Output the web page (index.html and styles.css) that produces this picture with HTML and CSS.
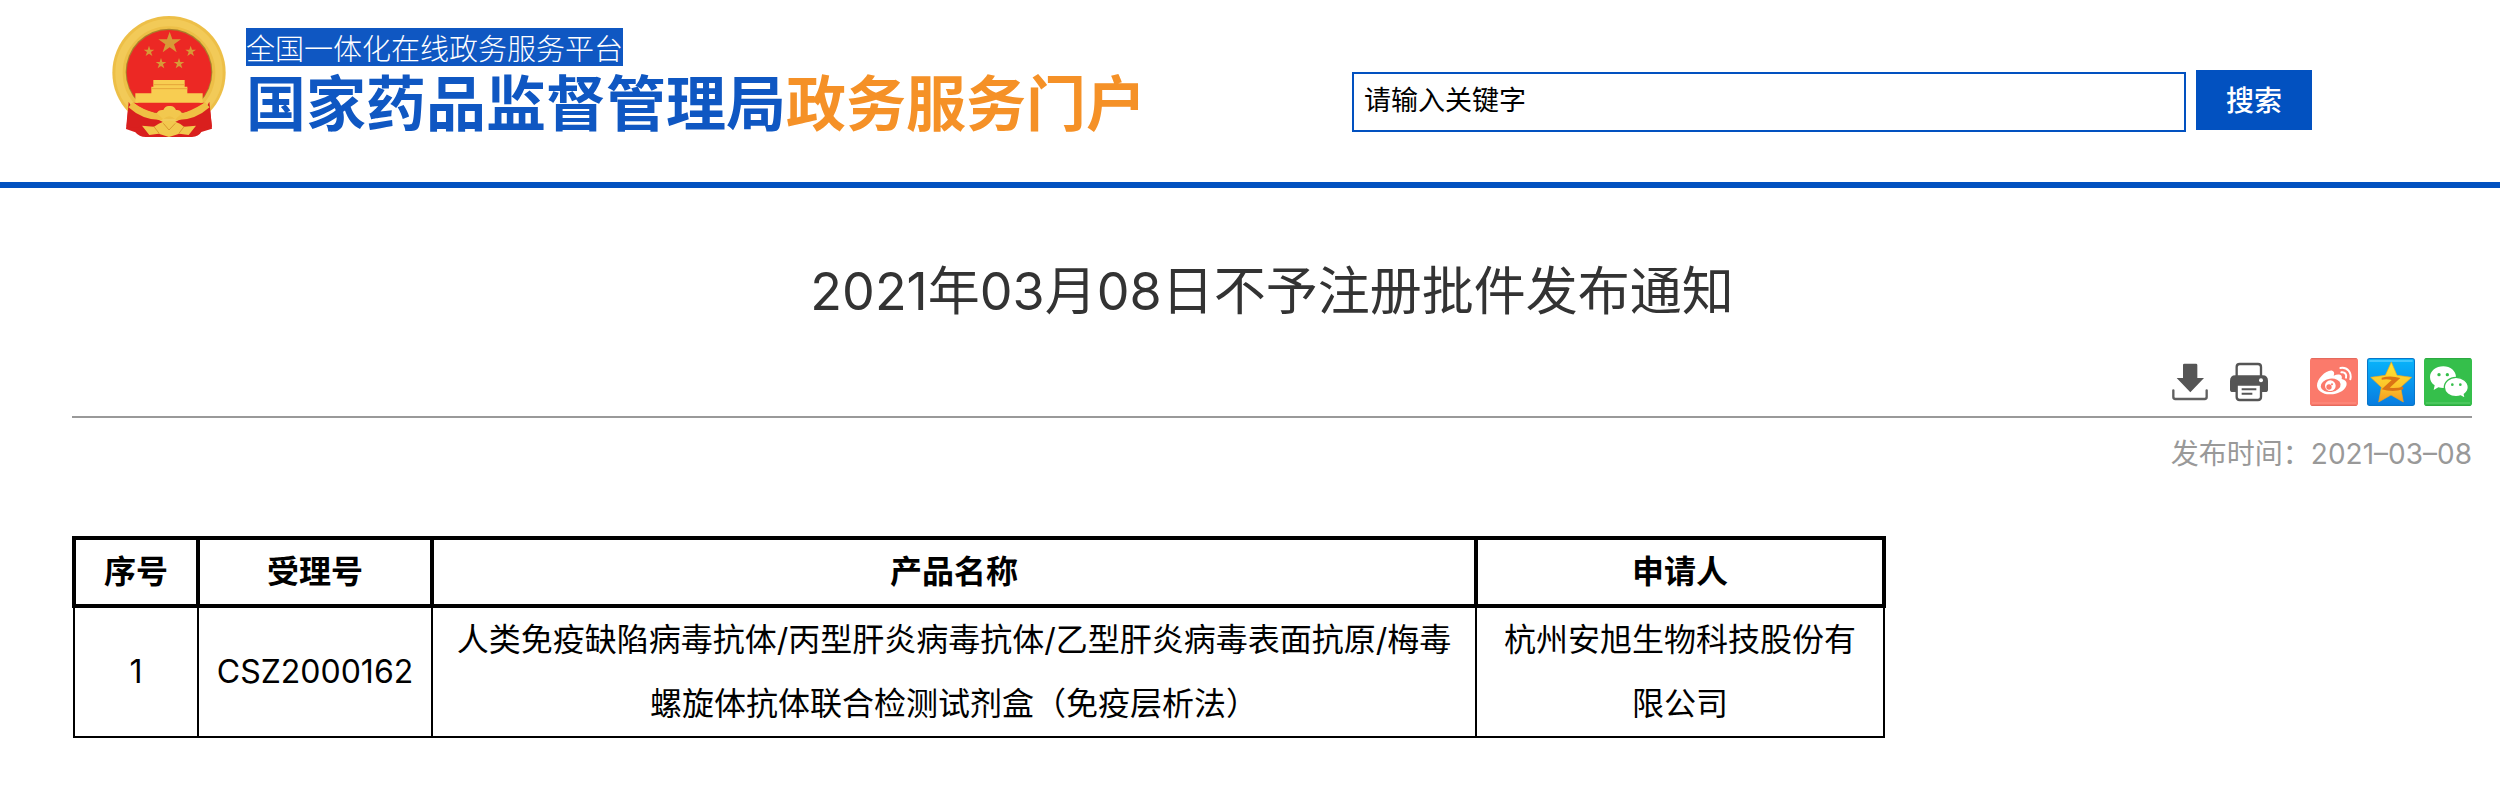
FILE: index.html
```html
<!DOCTYPE html>
<html lang="zh-CN">
<head>
<meta charset="utf-8">
<meta name="viewport" content="width=device-width, initial-scale=1">
<title>2021年03月08日不予注册批件发布通知</title>
<link rel="stylesheet" href="styles.css">
</head>
<body>
<header class="site-header">
  <div class="brand">
    <svg class="emblem" viewBox="36 18 342 366" aria-hidden="true">
      <path fill="#d91f1e" d="M86 275 L78 357 L106 367 Q118 382 140 381 L276 381 Q296 380 304 366 L336 356 L328 275 Z"/>
      <circle cx="207" cy="188" r="170" fill="#edbf47"/>
      <circle cx="207" cy="188" r="150" fill="none" stroke="#f2ca58" stroke-width="22"/>
      <circle cx="207" cy="186" r="130" fill="#a8802b"/>
      <circle cx="207" cy="187" r="127" fill="#ec2824"/>
      <path fill="#d91f1e" d="M86 275 Q108 318 160 322 L207 345 L254 322 Q308 318 328 275 L336 350 Q300 360 285 346 L270 381 H144 L130 346 Q110 358 80 348 Z"/>
      <path fill="#ec2824" d="M100 278 H314 Q270 304 250 308 L207 288 L165 308 Q130 300 100 278Z"/>
      <path fill="none" stroke="#efc044" stroke-width="20" d="M92 284 Q132 320 182 320 Q207 302 232 320 Q282 320 322 284"/>
      <path fill="#f2c84e" d="M170 310 Q176 298 190 300 Q196 286 209 288 Q222 286 228 300 Q240 298 246 310 L226 328 Q207 310 190 328Z"/>
      <path fill="#f2c84e" d="M126 347 L162 350 L176 341 Q207 324 240 341 L252 350 L288 347 L266 375 L238 371 L207 381 L176 371 L148 375Z"/>
      <path fill="none" stroke="#d9972f" stroke-width="3" d="M162 350 L178 371 M252 350 L236 371 M190 340 L207 360 L226 340"/>
      <path fill="#f8cd51" d="M106 278 V250 H154 V230 H160 V210 H254 V230 H262 V250 H308 V278Z"/>
      <path stroke="#e5a53a" stroke-width="3" d="M154 236 H262 M160 224 H254"/>
      <g fill="#d79a37">
        <path d="M209 65 L217 88 L243 88 L222 103 L230 127 L209 112 L188 127 L196 103 L175 88 L201 88Z"/>
        <path d="M147 107 l4 12 h12 l-10 7 4 12 -10 -7 -10 7 4 -12 -10 -7 h12Z"/>
        <path d="M272 107 l4 12 h12 l-10 7 4 12 -10 -7 -10 7 4 -12 -10 -7 h12Z"/>
        <path d="M183 144 l4 12 h12 l-10 7 4 12 -10 -7 -10 7 4 -12 -10 -7 h12Z"/>
        <path d="M237 144 l4 12 h12 l-10 7 4 12 -10 -7 -10 7 4 -12 -10 -7 h12Z"/>
      </g>
    </svg>
    <div class="brand-text">
      <span class="brand-tag">全国一体化在线政务服务平台</span>
      <span class="brand-name">国家药品监督管理局<span class="brand-accent">政务服务门户</span></span>
    </div>
  </div>
  <form class="search" role="search">
    <input class="search-input" type="text" placeholder="请输入关键字" aria-label="请输入关键字">
    <button class="search-button" type="submit">搜索</button>
  </form>
</header>

<main class="article">
  <h1 class="article-title">2021年03月08日不予注册批件发布通知</h1>
  <div class="toolbar">
    <div class="tools">
      <button class="icon-button" type="button" aria-label="下载">
        <svg width="36" height="38" viewBox="66 70 108 114">
          <path fill="#555" d="M99 76 Q99 72 103 72 H138 Q142 72 142 76 V115 H162 L121 158 L80 115 H99Z"/>
          <path fill="none" stroke="#606060" stroke-width="7" stroke-linecap="round" stroke-linejoin="round" d="M70 152 V172 Q70 178 76 178 H164 Q170 178 170 172 V152"/>
        </svg>
      </button>
      <button class="icon-button" type="button" aria-label="打印">
        <svg width="38" height="40" viewBox="240 69 114 120">
          <path fill="#555" d="M240 126 Q240 109 256 109 H338 Q354 109 354 126 V152 Q354 159 346 159 H248 Q240 159 240 152Z"/>
          <path fill="#fff" stroke="#555" stroke-width="7" d="M260 112 V84 Q260 75 269 75 H324 Q333 75 333 84 V112Z"/>
          <path fill="#fff" stroke="#555" stroke-width="7" d="M260 137 H333 V174 Q333 183 324 183 H269 Q260 183 260 174Z"/>
          <path stroke="#555" stroke-width="6" d="M275 151 H319 M275 164 H307"/>
          <circle cx="333" cy="124" r="6" fill="#fff"/>
        </svg>
      </button>
    </div>
    <div class="share">
      <a class="share-link" href="#weibo" aria-label="分享到微博">
        <svg width="48" height="48" viewBox="480 54 144 144">
          <rect x="480" y="54" width="144" height="144" rx="8" fill="#fb7a6b"/>
          <path fill="none" stroke="#e0685b" stroke-width="3" d="M484 56 H620 M484 196 H620"/>
          <path stroke="#ff9f92" stroke-width="2" d="M486 189 H618"/>
          <path fill="#fff" d="M501 137 C500 116 531 87 547 92 C554 95 553 102 551 107 C565 101 579 103 575 117 C588 120 592 128 589 137 C582 154 560 164 539 163 C517 162 502 152 501 137Z"/>
          <ellipse cx="542" cy="136" rx="30" ry="20" fill="#fb7a6b" transform="rotate(-8 542 136)"/>
          <circle cx="541" cy="137" r="16" fill="#fff"/>
          <circle cx="537" cy="141" r="8" fill="#fb7a6b"/>
          <circle cx="546" cy="133" r="3" fill="#fb7a6b"/>
          <path fill="none" stroke="#fff" stroke-width="6" stroke-linecap="round" d="M571 84 C592 80 606 98 601 118 M574 97 C584 95 591 103 588 113"/>
        </svg>
      </a>
      <a class="share-link" href="#qzone" aria-label="分享到QQ空间">
        <svg width="48" height="48" viewBox="648 54 144 144">
          <defs>
            <linearGradient id="sky" x1="0" y1="0" x2="0" y2="1"><stop offset="0" stop-color="#08b4fb"/><stop offset="1" stop-color="#087de0"/></linearGradient>
            <linearGradient id="gold" x1="0" y1="0" x2="0" y2="1"><stop offset="0" stop-color="#ffea32"/><stop offset=".6" stop-color="#fcc52b"/><stop offset="1" stop-color="#f39a21"/></linearGradient>
          </defs>
          <rect x="648" y="54" width="144" height="144" rx="8" fill="#0876c9"/>
          <rect x="651" y="57" width="138" height="137" rx="5" fill="url(#sky)"/>
          <path stroke="#7edcff" stroke-width="3" d="M655 63 H785"/>
          <path fill="url(#gold)" stroke="#f2a51d" stroke-width="2" stroke-linejoin="round" d="M721 66 L738 106 L782 112 L749 142 L757 186 L720 165 L683 186 L691 142 L659 112 L703 106Z"/>
          <path fill="#db7414" d="M692 113 Q718 105 748 114 L716 143 Q735 146 756 140 L757 148 Q725 158 692 148 L722 120 Q708 116 692 119Z"/>
        </svg>
      </a>
      <a class="share-link" href="#wechat" aria-label="分享到微信">
        <svg width="48" height="48" viewBox="822 54 144 144">
          <rect x="822" y="54" width="144" height="144" rx="8" fill="#35bf4b"/>
          <path stroke="#2ba63f" stroke-width="3" d="M826 56 H962 M826 196 H962"/>
          <path stroke="#75d783" stroke-width="2" d="M828 189 H960"/>
          <path fill="#fff" d="M880 79 C901 79 918 93 918 111 C918 130 902 144 880 144 Q872 144 865 142 L851 150 L854 136 C845 130 840 121 840 111 C840 93 858 79 880 79Z"/>
          <path fill="#fff" stroke="#35bf4b" stroke-width="4" d="M918 112 C938 112 955 125 955 142 C955 151 950 158 943 163 L946 176 L932 168 Q926 170 918 170 C898 170 883 158 883 142 C883 125 899 112 918 112Z"/>
          <g fill="#35bf4b"><circle cx="867" cy="104" r="5"/><circle cx="892" cy="104" r="5"/><circle cx="907" cy="134" r="4"/><circle cx="931" cy="134" r="4"/></g>
        </svg>
      </a>
    </div>
  </div>
  <p class="publish-date">发布时间：2021–03–08</p>

  <table class="results">
    <colgroup><col class="col-index"><col class="col-number"><col class="col-product"><col class="col-applicant"></colgroup>
    <thead>
      <tr><th scope="col">序号</th><th scope="col">受理号</th><th scope="col">产品名称</th><th scope="col">申请人</th></tr>
    </thead>
    <tbody>
      <tr>
        <td>1</td>
        <td>CSZ2000162</td>
        <td>人类免疫缺陷病毒抗体/丙型肝炎病毒抗体/乙型肝炎病毒表面抗原/梅毒螺旋体抗体联合检测试剂盒（免疫层析法）</td>
        <td>杭州安旭生物科技股份有限公司</td>
      </tr>
    </tbody>
  </table>
</main>
</body>
</html>
```
FILE: styles.css
```css
* {
  box-sizing: border-box;
}

body {
  margin: 0;
  background: #fff;
  color: #000;
  font-family: Inter, "Noto Sans CJK SC", sans-serif;
}

.site-header {
  display: flex;
  justify-content: space-between;
  align-items: flex-start;
  padding: 16px 188px 44px 112px;
  border-bottom: 6px solid #0251c0;
}

.brand {
  display: flex;
  gap: 20px;
}

.emblem {
  width: 114px;
  height: 122px;
}

.brand-text {
  display: flex;
  flex-direction: column;
  align-items: flex-start;
  gap: 4px;
  padding-top: 12px;
  font-family: "Noto Sans CJK SC", sans-serif;
  white-space: nowrap;
}

.brand-tag {
  background: #0f57c2;
  color: #fff;
  font-size: 29px;
  font-weight: 300;
  line-height: 38px;
}

.brand-name {
  color: #0f57c2;
  font-size: 60px;
  font-weight: 700;
  line-height: 60px;
}

.brand-accent {
  color: #f59127;
}

.search {
  display: flex;
  align-items: flex-start;
  gap: 10px;
  width: 960px;
  padding-top: 54px;
}

.search-input {
  flex: 1;
  min-width: 0;
  height: 60px;
  margin-top: 2px;
  padding: 0 10px 4px;
  border: 2px solid #0251c0;
  border-radius: 0;
  background: #fff;
  color: #000;
  font-family: inherit;
  font-size: 27px;
}

.search-input::placeholder {
  color: #000;
  opacity: 1;
}

.search-button {
  width: 116px;
  height: 60px;
  padding: 0 0 2px;
  border: 0;
  background: #0251c0;
  color: #fff;
  font-family: inherit;
  font-size: 28px;
  font-weight: 500;
}

.article {
  padding: 68px 28px 40px 72px;
}

.article-title {
  margin: 0 0 30px;
  color: #333;
  font-size: 52px;
  font-weight: 400;
  line-height: 72px;
  text-align: center;
}

.toolbar {
  display: flex;
  justify-content: flex-end;
  align-items: center;
  gap: 42px;
  padding-bottom: 10px;
  border-bottom: 2px solid #999;
}

.tools {
  display: flex;
  align-items: center;
  gap: 22px;
}

.icon-button {
  display: flex;
  padding: 0;
  border: 0;
  background: none;
}

.share {
  display: flex;
  gap: 9px;
}

.share-link,
.share-link svg {
  display: block;
}

.publish-date {
  margin: 14px 0 60px;
  color: #999;
  font-size: 28px;
  line-height: 44px;
  text-align: right;
}

.results {
  width: 1814px;
  max-width: 100%;
  border-collapse: collapse;
  table-layout: fixed;
  font-size: 32px;
  line-height: 64px;
  text-align: center;
}

.results th,
.results td {
  padding: 0 14px;
}

.results th {
  border: 4px solid #000;
  font-weight: 700;
}

.results td {
  border: 2px solid #000;
}

.col-index {
  width: 124px;
}

.col-number {
  width: 234px;
}

.col-product {
  width: 1044px;
}
```
